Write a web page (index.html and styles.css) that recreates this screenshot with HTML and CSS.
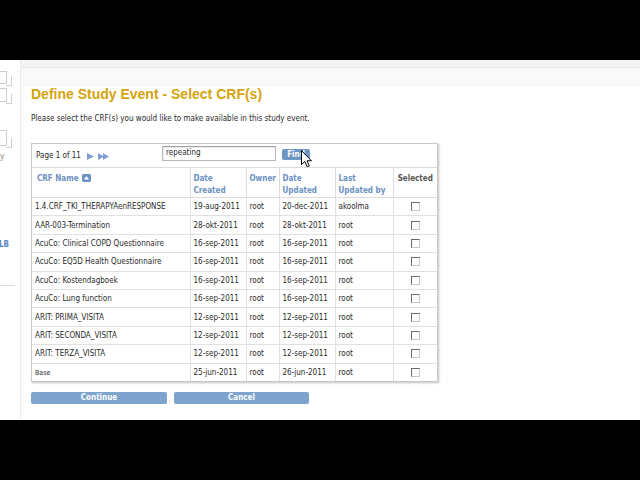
FILE: index.html
```html
<!DOCTYPE html>
<html>
<head>
<meta charset="utf-8">
<title>Define Study Event - Select CRF(s)</title>
<link rel="stylesheet" href="styles.css">
</head>
<body>
<div class="screen">
  <div class="blackbar"></div>
  <div class="app">
    <aside class="side">
      <div class="tab tab1"></div>
      <div class="tab tab2"></div>
      <div class="tab tab3"></div>
      <div class="side-y">y</div>
      <div class="side-lb">LB</div>
      <div class="side-rule"></div>
    </aside>
    <main class="main">
      <h1 class="title">Define Study Event - Select CRF(s)</h1>
      <p class="intro">Please select the CRF(s) you would like to make available in this study event.</p>
      <div class="box">
        <div class="toolbar">
          <div class="pager">
            <span class="pager-text">Page 1 of 11</span>
            <svg class="arrow" width="7" height="7" viewBox="0 0 7 7"><polygon points="0,0 7,3.5 0,7" fill="#7f9fd3"/></svg>
            <svg class="arrow2" width="12" height="7" viewBox="0 0 12 7"><polygon points="0,0 6,3.5 0,7" fill="#7f9fd3"/><polygon points="5,0 11,3.5 5,7" fill="#7f9fd3"/></svg>
          </div>
          <div class="search">repeating</div>
          <div class="find">Find</div>
          <svg class="cursor" width="12" height="18" viewBox="0 0 12 18"><path d="M0.5,0.5 L0.5,14.5 L3.8,11.5 L6.2,16.8 L8.3,15.9 L6,10.8 L10.5,10.8 Z" fill="#fff" stroke="#000" stroke-width="1" stroke-linejoin="round"/></svg>
        </div>
        <table class="grid">
          <colgroup>
            <col class="c-name"><col class="c-date"><col class="c-owner"><col class="c-date"><col class="c-by"><col class="c-sel">
          </colgroup>
          <thead>
            <tr>
              <th class="h-name">CRF Name <svg class="sort" width="9" height="8" viewBox="0 0 9 8"><rect x="0" y="0" width="9" height="8" rx="1.5" fill="#6d92c4"/><polygon points="4.5,2 7,5.5 2,5.5" fill="#fff"/></svg></th>
              <th>Date<br>Created</th>
              <th>Owner</th>
              <th>Date<br>Updated</th>
              <th>Last<br>Updated by</th>
              <th class="h-sel">Selected</th>
            </tr>
          </thead>
          <tbody>
            <tr><td>1.4.CRF_TKI_THERAPYAenRESPONSE</td><td>19-aug-2011</td><td>root</td><td>20-dec-2011</td><td>akoolma</td><td class="sel"><span class="cb"></span></td></tr>
            <tr><td>AAR-003-Termination</td><td>28-okt-2011</td><td>root</td><td>28-okt-2011</td><td>root</td><td class="sel"><span class="cb"></span></td></tr>
            <tr><td>AcuCo: Clinical COPD Questionnaire</td><td>16-sep-2011</td><td>root</td><td>16-sep-2011</td><td>root</td><td class="sel"><span class="cb"></span></td></tr>
            <tr><td>AcuCo: EQ5D Health Questionnaire</td><td>16-sep-2011</td><td>root</td><td>16-sep-2011</td><td>root</td><td class="sel"><span class="cb"></span></td></tr>
            <tr><td>AcuCo: Kostendagboek</td><td>16-sep-2011</td><td>root</td><td>16-sep-2011</td><td>root</td><td class="sel"><span class="cb"></span></td></tr>
            <tr><td>AcuCo: Lung function</td><td>16-sep-2011</td><td>root</td><td>16-sep-2011</td><td>root</td><td class="sel"><span class="cb"></span></td></tr>
            <tr><td>ARIT: PRIMA_VISITA</td><td>12-sep-2011</td><td>root</td><td>12-sep-2011</td><td>root</td><td class="sel"><span class="cb"></span></td></tr>
            <tr><td>ARIT: SECONDA_VISITA</td><td>12-sep-2011</td><td>root</td><td>12-sep-2011</td><td>root</td><td class="sel"><span class="cb"></span></td></tr>
            <tr><td>ARIT: TERZA_VISITA</td><td>12-sep-2011</td><td>root</td><td>12-sep-2011</td><td>root</td><td class="sel"><span class="cb"></span></td></tr>
            <tr><td class="small">Base</td><td>25-jun-2011</td><td>root</td><td>26-jun-2011</td><td>root</td><td class="sel"><span class="cb"></span></td></tr>
          </tbody>
        </table>
      </div>
      <div class="actions">
        <div class="btn btn-continue">Continue</div>
        <div class="btn btn-cancel">Cancel</div>
      </div>
    </main>
  </div>
  <div class="blackbar"></div>
</div>
</body>
</html>
```

FILE: styles.css
```css
html, body {
  margin: 0;
  padding: 0;
  background: #000;
}
.screen {
  width: 640px;
  height: 480px;
  display: flex;
  flex-direction: column;
  font-family: "DejaVu Sans Condensed", "Liberation Sans", sans-serif;
  color: #2a2a2a;
}
.blackbar {
  height: 60px;
  background: #000;
}
.app {
  height: 360px;
  display: flex;
  background: linear-gradient(to bottom, #f4f4f4 0, #f4f4f4 7px, #e8e8e8 7px, #e8e8e8 8px, #f9f9f9 8px, #f9f9f9 27px, #fff 27px);
}
.side {
  position: relative;
  width: 20px;
  border-right: 1px dotted #d8d8d8;
  background: #fff;
}
.tab {
  position: absolute;
  left: -2px;
  width: 8px;
  border: 1px solid #cdcdcd;
  border-left: 0;
  background: #fff;
}
.tab::after {
  content: "";
  position: absolute;
  right: -6px;
  bottom: -3px;
  width: 5px;
  height: 9px;
  border-right: 1px solid #d0d0d0;
  border-bottom: 1px solid #d0d0d0;
}
.tab1 { top: 11px; height: 11px; }
.tab2 { top: 28px; height: 12px; }
.tab3 { top: 70px; height: 14px; }
.side-y {
  position: absolute;
  left: 0;
  top: 92px;
  font-size: 8px;
  color: #888;
}
.side-lb {
  position: absolute;
  left: -1px;
  top: 180px;
  font-size: 8px;
  font-weight: bold;
  color: #5b86c2;
}
.side-rule {
  position: absolute;
  left: 0;
  top: 225px;
  width: 15px;
  border-top: 1px solid #dcdcdc;
}
.main {
  flex: 1;
  position: relative;
  padding: 26px 0 0 10px;
}
.title {
  margin: 0;
  font-family: "Liberation Sans", sans-serif;
  font-size: 14px;
  line-height: 16px;
  font-weight: bold;
  color: #d5a30c;
}
.intro {
  margin: 12px 0 0;
  font-size: 8px;
  line-height: 10px;
  color: #2a2a2a;
}
.box {
  margin-top: 19px;
  width: 405px;
  border: 1px solid #c9c9c9;
  box-shadow: 1px 1px 2px rgba(0,0,0,0.25);
  background: #fff;
}
.toolbar {
  position: relative;
  height: 23px;
  border-bottom: 1px solid #dcdcdc;
  display: flex;
  align-items: flex-start;
}
.pager {
  width: 130px;
  padding-left: 4px;
  box-sizing: border-box;
  margin-top: 7px;
  display: flex;
  align-items: center;
  font-size: 8px;
  line-height: 10px;
}
.pager-text { margin-right: 6px; }
.arrow { margin-right: 4px; }
.search {
  margin-top: 2px;
  width: 114px;
  height: 15px;
  box-sizing: border-box;
  border: 1px solid #b8b8b8;
  border-top-color: #a0a0a0;
  box-shadow: inset 1px 1px 1px rgba(0,0,0,0.08);
  padding: 1px 3px;
  font-size: 8px;
  line-height: 10px;
  color: #2a2a2a;
}
.find {
  margin: 5px 0 0 6px;
  width: 28px;
  height: 11px;
  border-radius: 2px;
  background: #6f97c6;
  color: #fff;
  font-size: 8px;
  line-height: 11px;
  font-weight: bold;
  text-align: center;
}
.cursor {
  position: absolute;
  left: 269px;
  top: 6px;
}
.grid {
  width: 100%;
  border-collapse: collapse;
  table-layout: fixed;
  font-size: 8px;
}
.c-name { width: 158px; }
.c-date { width: 56px; }
.c-owner { width: 33px; }
.c-by { width: 58px; }
.c-sel { width: 44px; }
.grid th {
  height: 29px;
  box-sizing: border-box;
  padding: 5px 3px 0;
  vertical-align: top;
  text-align: left;
  line-height: 12px;
  font-weight: bold;
  color: #6b90c2;
  border: 1px solid #dcdcdc;
  border-top: 0;
}
.grid th:first-child, .grid td:first-child { border-left: 0; }
.grid th:last-child, .grid td:last-child { border-right: 0; }
.grid th.h-name { padding-left: 5px; }
.sort { vertical-align: -1px; margin-left: 1px; }
.grid th.h-sel {
  text-align: center;
  color: #555;
}
.grid td {
  height: 18.4px;
  box-sizing: border-box;
  padding: 1px 3px 0;
  border: 1px solid #e0e0e0;
  white-space: nowrap;
  overflow: hidden;
  line-height: 10px;
  color: #2a2a2a;
}
.grid tbody tr:last-child td { border-bottom: 0; height: 18px; }
.grid td.small { font-size: 7px; }
.grid td.sel { text-align: center; }
.cb {
  display: inline-block;
  width: 9px;
  height: 9px;
  box-sizing: border-box;
  border: 1px solid #6a6a6a;
  border-right-color: #c8c8c8;
  border-bottom-color: #c8c8c8;
  vertical-align: middle;
}
.actions {
  margin-top: 10px;
  display: flex;
  gap: 7px;
}
.btn {
  height: 12px;
  border-radius: 2px;
  background: #7ea3cd;
  color: #fff;
  font-size: 8px;
  line-height: 12px;
  font-weight: bold;
  text-align: center;
}
.btn-continue { width: 136px; }
.btn-cancel { width: 135px; }
```
